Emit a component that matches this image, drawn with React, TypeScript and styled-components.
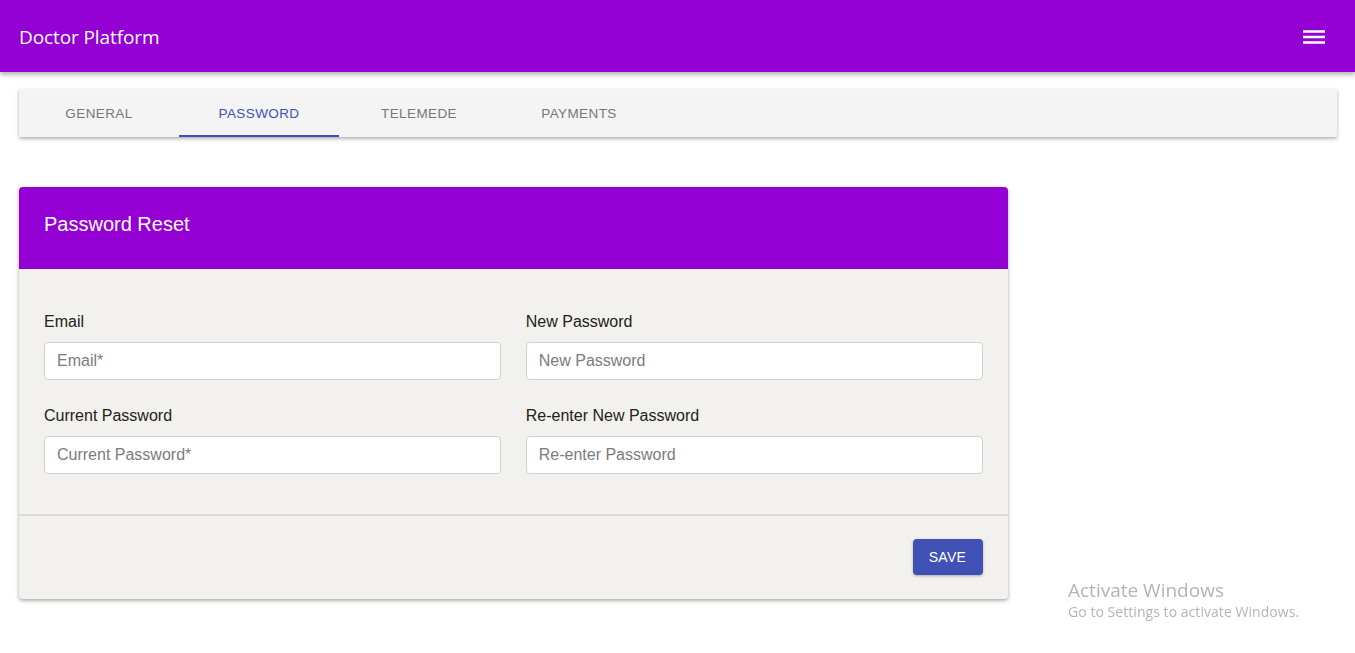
import React, { useState } from "react";
import styled, { createGlobalStyle } from "styled-components";

const GlobalStyle = createGlobalStyle`
  body {
    margin: 0;
    background: #ffffff;
    font-family: "Liberation Sans", Arial, sans-serif;
  }
`;

const AppBar = styled.header`
  height: 72px;
  background-color: #9400d3;
  display: flex;
  align-items: center;
  justify-content: space-between;
  padding: 2px 29px 0 19px;
  box-sizing: border-box;
  box-shadow: 0 2px 4px rgba(0, 0, 0, 0.2), 0 4px 5px rgba(0, 0, 0, 0.12);
  position: relative;
  z-index: 2;
`;

const Title = styled.h1`
  margin: 0;
  color: #ffffff;
  font-family: "Open Sans", "Noto Sans", sans-serif;
  font-size: 19px;
  font-weight: 400;
  letter-spacing: -0.1px;
`;

const MenuButton = styled.button`
  background: none;
  border: none;
  padding: 0;
  width: 24px;
  height: 24px;
  display: flex;
  align-items: center;
  justify-content: center;
  cursor: pointer;
`;

const Content = styled.main`
  padding: 17px 18px 40px 19px;
`;

const TabBar = styled.nav`
  display: flex;
  height: 48px;
  background: #f4f4f4;
  box-shadow: 0 2px 4px rgba(0, 0, 0, 0.25), 0 1px 2px rgba(0, 0, 0, 0.1);
`;

const Tab = styled.button<{ $active?: boolean }>`
  width: 160px;
  height: 48px;
  background: none;
  border: none;
  border-bottom: 2px solid ${(p) => (p.$active ? "#3f51b5" : "transparent")};
  padding: 2px 0 0;
  color: ${(p) => (p.$active ? "#3f51b5" : "#777777")};
  font-family: "Liberation Sans", Arial, sans-serif;
  font-size: 13.5px;
  letter-spacing: 0.4px;
  text-transform: uppercase;
  cursor: pointer;
`;

const Card = styled.section`
  margin-top: 50px;
  width: 75%;
  background: #f2f1ee;
  border-radius: 4px;
  box-shadow: 0 2px 4px rgba(0, 0, 0, 0.25), 0 1px 3px rgba(0, 0, 0, 0.12);
`;

const CardHeader = styled.div`
  height: 82px;
  box-sizing: border-box;
  background: #9400d3;
  border-radius: 4px 4px 0 0;
  display: flex;
  align-items: center;
  padding: 0 25px 8px;
`;

const CardTitle = styled.h2`
  margin: 0;
  color: #ffffff;
  font-size: 20px;
  font-weight: 400;
`;

const CardBody = styled.div`
  display: grid;
  grid-template-columns: 1fr 1fr;
  column-gap: 25px;
  row-gap: 27px;
  padding: 44px 25px 40px;
  border-bottom: 2px solid #dcdbd8;
`;

const Field = styled.div`
  display: flex;
  flex-direction: column;
`;

const Label = styled.label`
  font-size: 16px;
  line-height: 18px;
  color: #212121;
  margin-bottom: 11px;
`;

const Input = styled.input`
  height: 38px;
  box-sizing: border-box;
  border: 1px solid #cfd0d6;
  border-radius: 4px;
  background: #ffffff;
  padding: 0 12px;
  font-family: "Liberation Sans", Arial, sans-serif;
  font-size: 16px;
  color: #333;
  outline: none;

  &::placeholder {
    color: #7b7b80;
  }
`;

const CardFooter = styled.div`
  display: flex;
  justify-content: flex-end;
  padding: 23px 25px 24px;
`;

const SaveButton = styled.button`
  width: 70px;
  height: 36px;
  border: none;
  border-radius: 4px;
  background: #3f51b5;
  color: #ffffff;
  font-family: "Liberation Sans", Arial, sans-serif;
  font-size: 14px;
  letter-spacing: 0.3px;
  box-shadow: 0 1px 3px rgba(0, 0, 0, 0.3);
  cursor: pointer;
`;

const Watermark = styled.div`
  position: fixed;
  left: 1068px;
  top: 578px;
  font-family: "Open Sans", "Noto Sans", sans-serif;
  color: #b4b4b4;
  pointer-events: none;
`;

const WatermarkTitle = styled.div`
  font-size: 19px;
  line-height: 24px;
`;

const WatermarkText = styled.div`
  font-size: 14px;
  line-height: 20px;
  letter-spacing: 0.05px;
`;

const tabs = ["General", "Password", "Telemede", "Payments"];

const fields = [
  { label: "Email", placeholder: "Email*", type: "email" },
  { label: "New Password", placeholder: "New Password", type: "password" },
  { label: "Current Password", placeholder: "Current Password*", type: "password" },
  { label: "Re-enter New Password", placeholder: "Re-enter Password", type: "password" },
];

const App = () => {
  const [active, setActive] = useState(1);

  return (
    <>
      <GlobalStyle />
      <AppBar>
        <Title>Doctor Platform</Title>
        <MenuButton aria-label="menu">
          <svg width="24" height="24" viewBox="0 0 24 24">
            <path d="M1 6.5h22M1 12h22M1 17.5h22" stroke="#fff" strokeWidth="2.4" fill="none" />
          </svg>
        </MenuButton>
      </AppBar>

      <Content>
        <TabBar>
          {tabs.map((t, i) => (
            <Tab key={t} $active={i === active} onClick={() => setActive(i)}>
              {t}
            </Tab>
          ))}
        </TabBar>

        <Card>
          <CardHeader>
            <CardTitle>Password Reset</CardTitle>
          </CardHeader>
          <CardBody>
            {fields.map((f) => (
              <Field key={f.label}>
                <Label>{f.label}</Label>
                <Input type={f.type} placeholder={f.placeholder} />
              </Field>
            ))}
          </CardBody>
          <CardFooter>
            <SaveButton>SAVE</SaveButton>
          </CardFooter>
        </Card>
      </Content>

      <Watermark>
        <WatermarkTitle>Activate Windows</WatermarkTitle>
        <WatermarkText>Go to Settings to activate Windows.</WatermarkText>
      </Watermark>
    </>
  );
};

export default App;
